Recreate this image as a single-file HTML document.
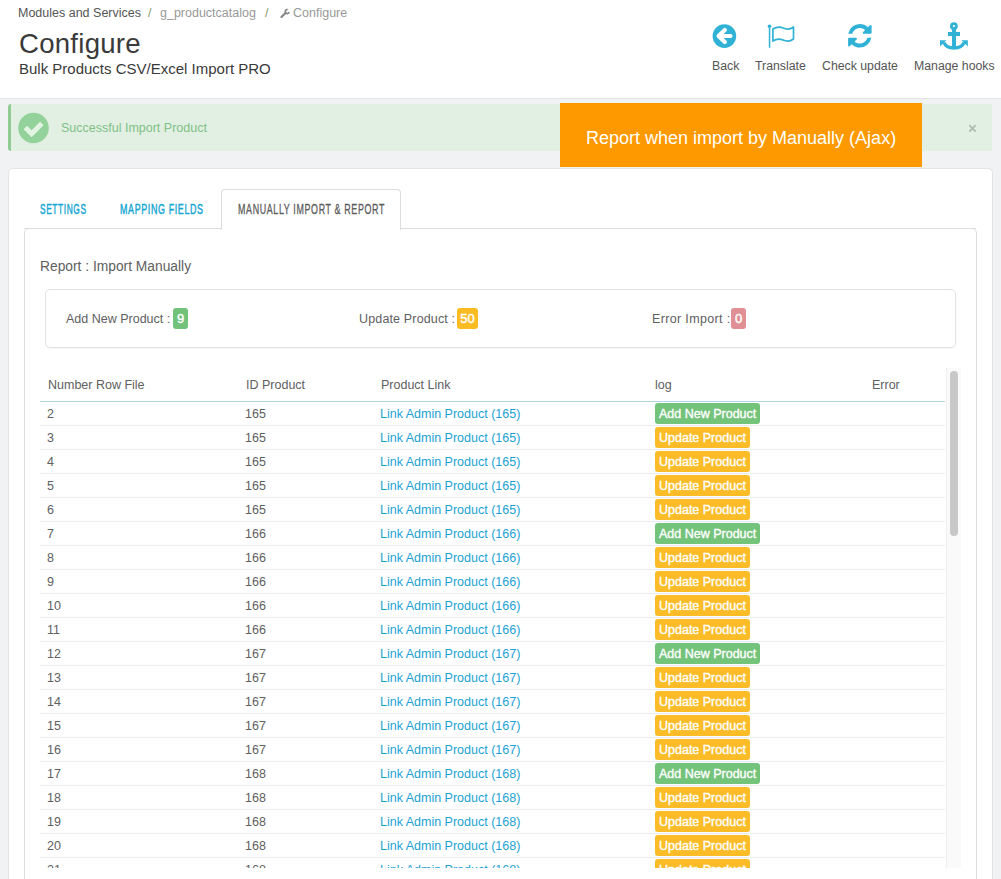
<!DOCTYPE html>
<html><head><meta charset="utf-8">
<style>
*{box-sizing:border-box;margin:0;padding:0}
html,body{width:1001px;height:879px;overflow:hidden}
body{background:#f0f2f4;font-family:"Liberation Sans",sans-serif;color:#555;position:relative}
#hdr{position:absolute;left:0;top:0;width:1001px;height:99px;background:#fff;border-bottom:1px solid #e3e5e7}
.t{position:absolute;white-space:nowrap;line-height:1}
.sx{transform-origin:0 0}
svg{position:absolute;overflow:visible}
#alert{position:absolute;left:8px;top:104px;width:984px;height:47px;background:#e2f0e3;border-left:3px solid #8fcb93;border-radius:3px 0 0 3px}
#orange{position:absolute;left:560px;top:103px;width:362px;height:64px;background:#ff9900}
#panel{position:absolute;left:8px;top:168px;width:985px;height:760px;background:#fff;border:1px solid #e3e3e3;border-radius:5px;box-shadow:0 2px 0 rgba(0,0,0,0.05)}
#tabline{position:absolute;left:24px;top:228px;width:952px;height:1px;background:#ddd}
#acttab{position:absolute;left:221px;top:189px;width:180px;height:41px;background:#fff;border:1px solid #ddd;border-bottom:none;border-radius:4px 4px 0 0}
#content{position:absolute;left:24px;top:228px;width:953px;height:700px;background:#fff;border:1px solid #ddd;border-radius:5px 5px 0 0}
#stats{position:absolute;left:45px;top:289px;width:911px;height:59px;border:1px solid #e3e3e3;border-radius:5px;box-shadow:0 1px 0 rgba(0,0,0,0.04)}
.badge{position:absolute;height:21px;border-radius:3px;color:#fff;font-size:13px;-webkit-text-stroke:0.4px #fff;line-height:22px;text-align:center}
#scroll{position:absolute;left:40px;top:368px;width:905px;height:500px;overflow:hidden}
table{border-collapse:collapse;width:905px;table-layout:fixed;font-size:12.5px}
th{font-weight:normal;text-align:left;height:33px;border-bottom:1px solid #b0d3e6;padding:2px 0 0 8px;vertical-align:middle;line-height:1}
td{height:24px;border-bottom:1px solid #eaedef;padding:3px 0 0 7px;line-height:1;vertical-align:middle}
td.c4{padding-left:8px}
td a{color:#1ba2d4}
td{color:#606060}th{color:#606060}
.lb{display:inline-block;height:21px;line-height:22px;padding:0 4px;border-radius:3px;color:#fff;font-size:12.5px;-webkit-text-stroke:0.35px #fff;margin-top:-3px;vertical-align:top}
.g{background:#74c37b}
.y{background:#fbbc28}
#sbtrack{position:absolute;left:946px;top:368px;width:15px;height:500px;background:#fafafa;border-left:1px solid #eee}
#sbthumb{position:absolute;left:950px;top:371px;width:8px;height:165px;background:#c8c8c8;border-radius:4px}
</style></head><body>
<div id="hdr"></div>
<div class="t" style="left:18px;top:7px;font-size:12.5px;color:#555">Modules and Services</div>
<div class="t" style="left:148px;top:7px;font-size:12.5px;color:#7f9c62">/</div>
<div class="t" style="left:160px;top:7px;font-size:12.5px;color:#999">g_productcatalog</div>
<div class="t" style="left:265px;top:7px;font-size:12.5px;color:#7f9c62">/</div>
<svg style="left:0;top:0" width="1" height="1"><path d="M281.4,17.1 L285.6,13" stroke="#858585" stroke-width="2.1" stroke-linecap="round"/><path d="M287.8,9.6 A2,2 0 1,0 289.2,12.1" fill="none" stroke="#858585" stroke-width="1.6"/></svg>
<div class="t" style="left:293px;top:7px;font-size:12.5px;color:#999">Configure</div>
<div class="t" style="left:19px;top:30px;font-size:27.6px;color:#3a3a3a;letter-spacing:0.25px">Configure</div>
<div class="t" style="left:19px;top:61px;font-size:15px;color:#3a3a3a">Bulk Products CSV/Excel Import PRO</div>

<!-- toolbar icons -->
<svg style="left:0;top:0" width="1" height="1">
 <circle cx="724.4" cy="36.1" r="11.8" fill="#2fb2d6"/>
 <path d="M724.8,30 L718.6,36 L724.8,42" fill="none" stroke="#fff" stroke-width="4.2" stroke-linecap="round" stroke-linejoin="round"/>
 <path d="M720,36 L730.5,36" stroke="#fff" stroke-width="4.2" stroke-linecap="round"/>
</svg>
<svg style="left:0;top:0" width="1" height="1">
 <circle cx="769.5" cy="26.3" r="1.8" fill="#2fb2d6"/>
 <rect x="768.8" y="26" width="1.5" height="21.7" fill="#2fb2d6"/>
 <path d="M772.9,29 C776,27.2 779.5,26.6 783,28 C786.5,29.5 790.5,29.2 793.5,27 L793.5,39 C790.5,41.2 786.5,41.5 783,40 C779.5,38.6 776,39 772.9,41 Z" fill="none" stroke="#2fb2d6" stroke-width="1.7" stroke-linejoin="round"/>
</svg>
<svg style="left:848px;top:24.2px" width="23.7" height="23.5" viewBox="0 0 1536 1536">
 <path fill="#2fb2d6" d="M1511 928q0 5-1 7-64 268-268 434.5t-478 166.5q-146 0-282.5-55t-243.5-157l-129 129q-19 19-45 19t-45-19-19-45v-448q0-26 19-45t45-19h448q26 0 45 19t19 45-19 45l-137 137q71 66 161 102t187 36q134 0 250-65t186-179q11-17 53-117 8-23 30-23h192q13 0 22.5 9.5t9.5 22.5zm25-800v448q0 26-19 45t-45 19h-448q-26 0-45-19t-19-45 19-45l138-138q-148-137-349-137-134 0-250 65t-186 179q-11 17-53 117-8 23-30 23h-199q-13 0-22.5-9.5t-9.5-22.5v-7q65-268 270-434.5t480-166.5q146 0 284 55.5t245 156.5l130-129q19-19 45-19t45 19 19 45z"/>
</svg>
<svg style="left:0;top:0" width="1" height="1">
 <circle cx="953.9" cy="26.1" r="2.5" fill="none" stroke="#2fb2d6" stroke-width="2.8"/>
 <rect x="948" y="32" width="12" height="4" fill="#2fb2d6"/>
 <rect x="952" y="28.5" width="4" height="20" fill="#2fb2d6"/>
 <path d="M944,42.5 Q946,48 954,48 Q962,48 964,42.5" fill="none" stroke="#2fb2d6" stroke-width="3.4"/>
 <path d="M940,40.3 L946.3,40.3 L940,46.5 Z" fill="#2fb2d6"/>
 <path d="M967.8,40.3 L961.5,40.3 L967.8,46.5 Z" fill="#2fb2d6"/>
</svg>
<div class="t" style="left:712px;top:60px;font-size:12.3px;color:#555">Back</div>
<div class="t" style="left:755px;top:60px;font-size:12.3px;color:#555">Translate</div>
<div class="t" style="left:822px;top:60px;font-size:12.3px;color:#555">Check update</div>
<div class="t" style="left:914px;top:60px;font-size:12.3px;color:#555">Manage hooks</div>

<div id="alert"></div>
<svg style="left:0;top:0" width="1" height="1">
 <circle cx="33.5" cy="128" r="15.3" fill="#93d29a"/>
 <path d="M25.3,127.6 L31.6,133.8 L41.8,123.6" fill="none" stroke="#e3f4e3" stroke-width="4.9"/>
</svg>
<div class="t" style="left:61px;top:122px;font-size:12.5px;color:#80c086">Successful Import Product</div>
<div id="orange"></div>
<div class="t" style="left:586px;top:129px;font-size:18px;color:#fff">Report when import by Manually (Ajax)</div>
<svg style="left:0;top:0" width="1" height="1"><path d="M969.3,125.2 L975.7,131.6 M975.7,125.2 L969.3,131.6" stroke="#adbdad" stroke-width="1.8"/></svg>

<div id="panel"></div>
<div id="content"></div>
<div id="tabline"></div>
<div id="acttab"></div>
<div class="t sx" style="left:40px;top:202px;font-size:14px;color:#14a6d2;-webkit-text-stroke:0.45px #14a6d2;letter-spacing:1px;transform:scaleX(0.597)">SETTINGS</div>
<div class="t sx" style="left:120px;top:202px;font-size:14px;color:#14a6d2;-webkit-text-stroke:0.45px #14a6d2;letter-spacing:1px;transform:scaleX(0.636)">MAPPING FIELDS</div>
<div class="t sx" style="left:238px;top:202px;font-size:14px;color:#5a5a5a;-webkit-text-stroke:0.3px #5a5a5a;letter-spacing:1px;transform:scaleX(0.636)">MANUALLY IMPORT &amp; REPORT</div>

<div class="t" style="left:40px;top:260px;font-size:13.8px;color:#606060">Report : Import Manually</div>
<div id="stats"></div>
<div class="t" style="left:66px;top:313px;font-size:12.5px;color:#606060">Add New Product :</div>
<div class="badge" style="left:173px;top:308px;width:15px;background:#72c279">9</div>
<div class="t" style="left:359px;top:313px;font-size:12.5px;color:#606060;letter-spacing:0.15px">Update Product :</div>
<div class="badge" style="left:457px;top:308px;width:21px;background:#fbbb22">50</div>
<div class="t" style="left:652px;top:313px;font-size:12.5px;color:#606060;letter-spacing:0.35px">Error Import :</div>
<div class="badge" style="left:731px;top:308px;width:15px;background:#e08f95">0</div>

<div id="scroll">
<table>
<colgroup><col style="width:198px"><col style="width:135px"><col style="width:274px"><col style="width:217px"><col></colgroup>
<thead><tr><th>Number Row File</th><th>ID Product</th><th>Product Link</th><th>log</th><th>Error</th></tr></thead>
<tbody>
<tr><td class="c1">2</td><td class="c2">165</td><td class="c3"><a>Link Admin Product (165)</a></td><td class="c4"><span class="lb g">Add New Product</span></td><td class="c5"></td></tr>
<tr><td class="c1">3</td><td class="c2">165</td><td class="c3"><a>Link Admin Product (165)</a></td><td class="c4"><span class="lb y">Update Product</span></td><td class="c5"></td></tr>
<tr><td class="c1">4</td><td class="c2">165</td><td class="c3"><a>Link Admin Product (165)</a></td><td class="c4"><span class="lb y">Update Product</span></td><td class="c5"></td></tr>
<tr><td class="c1">5</td><td class="c2">165</td><td class="c3"><a>Link Admin Product (165)</a></td><td class="c4"><span class="lb y">Update Product</span></td><td class="c5"></td></tr>
<tr><td class="c1">6</td><td class="c2">165</td><td class="c3"><a>Link Admin Product (165)</a></td><td class="c4"><span class="lb y">Update Product</span></td><td class="c5"></td></tr>
<tr><td class="c1">7</td><td class="c2">166</td><td class="c3"><a>Link Admin Product (166)</a></td><td class="c4"><span class="lb g">Add New Product</span></td><td class="c5"></td></tr>
<tr><td class="c1">8</td><td class="c2">166</td><td class="c3"><a>Link Admin Product (166)</a></td><td class="c4"><span class="lb y">Update Product</span></td><td class="c5"></td></tr>
<tr><td class="c1">9</td><td class="c2">166</td><td class="c3"><a>Link Admin Product (166)</a></td><td class="c4"><span class="lb y">Update Product</span></td><td class="c5"></td></tr>
<tr><td class="c1">10</td><td class="c2">166</td><td class="c3"><a>Link Admin Product (166)</a></td><td class="c4"><span class="lb y">Update Product</span></td><td class="c5"></td></tr>
<tr><td class="c1">11</td><td class="c2">166</td><td class="c3"><a>Link Admin Product (166)</a></td><td class="c4"><span class="lb y">Update Product</span></td><td class="c5"></td></tr>
<tr><td class="c1">12</td><td class="c2">167</td><td class="c3"><a>Link Admin Product (167)</a></td><td class="c4"><span class="lb g">Add New Product</span></td><td class="c5"></td></tr>
<tr><td class="c1">13</td><td class="c2">167</td><td class="c3"><a>Link Admin Product (167)</a></td><td class="c4"><span class="lb y">Update Product</span></td><td class="c5"></td></tr>
<tr><td class="c1">14</td><td class="c2">167</td><td class="c3"><a>Link Admin Product (167)</a></td><td class="c4"><span class="lb y">Update Product</span></td><td class="c5"></td></tr>
<tr><td class="c1">15</td><td class="c2">167</td><td class="c3"><a>Link Admin Product (167)</a></td><td class="c4"><span class="lb y">Update Product</span></td><td class="c5"></td></tr>
<tr><td class="c1">16</td><td class="c2">167</td><td class="c3"><a>Link Admin Product (167)</a></td><td class="c4"><span class="lb y">Update Product</span></td><td class="c5"></td></tr>
<tr><td class="c1">17</td><td class="c2">168</td><td class="c3"><a>Link Admin Product (168)</a></td><td class="c4"><span class="lb g">Add New Product</span></td><td class="c5"></td></tr>
<tr><td class="c1">18</td><td class="c2">168</td><td class="c3"><a>Link Admin Product (168)</a></td><td class="c4"><span class="lb y">Update Product</span></td><td class="c5"></td></tr>
<tr><td class="c1">19</td><td class="c2">168</td><td class="c3"><a>Link Admin Product (168)</a></td><td class="c4"><span class="lb y">Update Product</span></td><td class="c5"></td></tr>
<tr><td class="c1">20</td><td class="c2">168</td><td class="c3"><a>Link Admin Product (168)</a></td><td class="c4"><span class="lb y">Update Product</span></td><td class="c5"></td></tr>
<tr><td class="c1">21</td><td class="c2">168</td><td class="c3"><a>Link Admin Product (168)</a></td><td class="c4"><span class="lb y">Update Product</span></td><td class="c5"></td></tr>
<tr><td class="c1">22</td><td class="c2">168</td><td class="c3"><a>Link Admin Product (168)</a></td><td class="c4"><span class="lb y">Update Product</span></td><td class="c5"></td></tr>
</tbody></table>
</div>
<div id="sbtrack"></div>
<div id="sbthumb"></div>
</body></html>
